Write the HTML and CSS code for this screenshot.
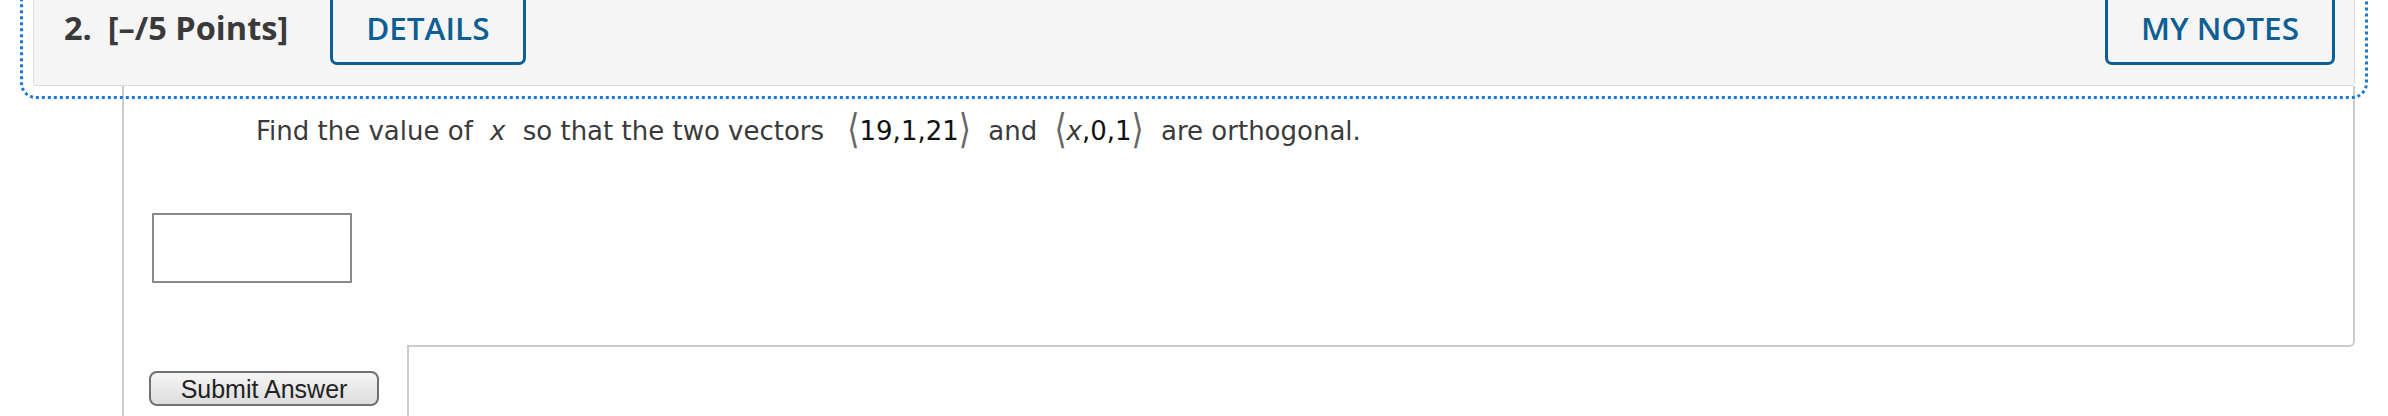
FILE: index.html
```html
<!DOCTYPE html>
<html lang="en">
<head>
  <meta charset="UTF-8">
  <meta name="viewport" content="width=device-width, initial-scale=1.0">
  <title>Question 2</title>
  <link rel="stylesheet" href="styles.css">
</head>
<body>
  <div class="question">
    <div class="q-head">
      <span class="q-num">2.</span>
      <span class="q-points">[&ndash;/5 Points]</span>
      <button class="head-btn">DETAILS</button>
      <button class="head-btn notes">MY NOTES</button>
    </div>
    <div class="q-main">
      <div class="q-body">
        <p class="q-text">Find the value of <span class="math"><i>x</i></span> so that the two vectors <span class="math wide"><span class="ang">&#10216;</span>19,1,21<span class="ang">&#10217;</span></span> and <span class="math"><span class="ang">&#10216;</span><i>x</i>,0,1<span class="ang">&#10217;</span></span> are orthogonal.</p>
        <input type="text" class="answer">
      </div>
      <div class="q-foot">
        <div class="submit-col">
          <button class="submit">Submit Answer</button>
        </div>
        <div class="feedback"></div>
      </div>
    </div>
  </div>
</body>
</html>
```

FILE: styles.css
```css
body {
  margin: 0;
  padding: 0;
  background-color: white;
  color: #333;
  font-family: "DejaVu Sans", Verdana, sans-serif;
}
.question {
  margin: -32px 33px 0 33px;
}

/* header bar */
.q-head {
  display: flex;
  align-items: center;
  background-color: #f5f5f5;
  border: 1px solid #ddd;
  border-radius: 3px;
  padding: 20px 19px 20px 30px;
  outline: 3px dotted #1a78d6; /* focus ring */
  outline-offset: 10px;
  font-family: "Open Sans", sans-serif;
}
.q-num {
  font-size: 32.5px;
  font-weight: 700;
  color: #3a3a3a;
  margin-right: 16px;
}
.q-points {
  font-size: 32.5px;
  font-weight: 700;
  color: #3a3a3a;
}
.head-btn {
  height: 76px;
  padding: 0 33px;
  margin-left: 42px;
  background: transparent;
  border: 3px solid #0d5e94;
  border-radius: 7px;
  color: #0d5e94;
  font-family: "Open Sans", sans-serif;
  font-size: 31.5px;
  font-weight: 600;
}
.head-btn.notes {
  margin-left: auto;
}

/* question body */
.q-main {
  margin-left: 89px;
  border-left: 2px solid #ccc;
}
.q-body {
  border-right: 2px solid #ccc;
  border-bottom: 2px solid #ccc;
  border-bottom-right-radius: 6px;
  padding: 26px 0 62px 28px;
}
.q-text {
  margin: 0 0 0 104px;
  font-size: 26px;
  line-height: 39px;
  color: #3a3a3a;
}
.math {
  color: #111;
  padding: 0 9px;
}
.math.wide {
  padding-left: 15px;
}
.math i {
  color: #3a3a3a;
}
.ang {
  display: inline-block;
  font-size: 1.2em;
  line-height: 0;
  color: #666;
  transform: scaleY(1.3);
}
.answer {
  display: block;
  margin: 62px 0 0 0;
  width: 200px;
  height: 70px;
  box-sizing: border-box;
  border: 2px solid #8a8a8a;
  border-radius: 0;
}

/* submit row */
.q-foot {
  display: flex;
  margin-top: -2px;
}
.submit-col {
  width: 258px;
  padding: 26px 0 20px 25px;
  background-color: white;
}
.submit {
  width: 230px;
  height: 35px;
  border: 2px solid #707070;
  border-radius: 8px;
  background: linear-gradient(#f6f6f6, #dcdcdc);
  color: #222;
  font-family: "Liberation Sans", Arial, sans-serif;
  font-size: 25px;
  line-height: 28px;
  padding: 0;
}
.feedback {
  flex: 1;
  border-left: 2px solid #ccc;
}
```
